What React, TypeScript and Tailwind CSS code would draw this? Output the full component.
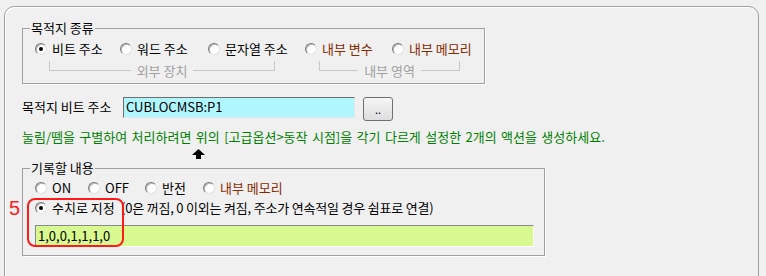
import React from 'react'

const font = { fontFamily: '"Noto Sans CJK KR", "Liberation Sans", sans-serif' }

function Radio({ checked = false }: { checked?: boolean }) {
  return (
    <span className="w-[12px] h-[12px] shrink-0 rounded-full border border-t-[#7a7a7a] border-l-[#7a7a7a] border-b-[#e2e2e2] border-r-[#e2e2e2] bg-white flex items-center justify-center shadow-[inset_1px_1px_0_#b8b8b8]">
      {checked && <span className="w-[4px] h-[4px] rounded-full bg-black" />}
    </span>
  )
}

function Option({ label, checked, width, brown }: { label: string; checked?: boolean; width?: string; brown?: boolean }) {
  return (
    <div className={`flex items-center gap-[5px] h-[14px] ${width ?? ''}`}>
      <Radio checked={checked} />
      <span className={`leading-[14px] whitespace-nowrap ${brown ? 'text-[#862a00]' : 'text-black'}`}>{label}</span>
    </div>
  )
}

function Bracket({ label, width }: { label: string; width: string }) {
  return (
    <div className={`flex ${width}`}>
      <div className="flex-1 h-[10px] border-l border-b border-[#c8c8c8]" />
      <span className="px-[6px] mt-[3px] leading-[14px] text-[#a0a0a0] whitespace-nowrap">{label}</span>
      <div className="flex-1 h-[10px] border-r border-b border-[#c8c8c8]" />
    </div>
  )
}

export default function App() {
  return (
    <div className="relative w-[766px] h-[276px] overflow-hidden bg-[#f0f0f0] text-[13px]" style={font}>
      <div className="ml-[4px] mt-[6px] w-[755px] h-[300px] border border-[#a0a0a0] rounded-t-[10px] shadow-[inset_1px_1px_0_#ffffff] pl-[17px] pt-[14px]">
        {/* 목적지 종류 */}
        <fieldset className="w-[463px] h-[63px] border border-[#a0a0a0] shadow-[1px_1px_0_#ffffff]">
          <legend className="ml-[7px] px-[1px] leading-[14px]">목적지 종류</legend>
          <div className="pl-[12px]">
            <div className="flex mt-[7px]">
              <Option label="비트 주소" checked width="w-[85px]" />
              <Option label="워드 주소" width="w-[88px]" />
              <Option label="문자열 주소" width="w-[97px]" />
              <Option label="내부 변수" width="w-[87px]" brown />
              <Option label="내부 메모리" brown />
            </div>
            <div className="flex mt-[5px] ml-[14px]">
              <Bracket label="외부 장치" width="w-[226px]" />
              <div className="w-[44px]" />
              <Bracket label="내부 영역" width="w-[141px]" />
            </div>
          </div>
        </fieldset>

        <div className="flex items-start mt-[13px]">
          <span className="w-[101px] mt-[3px] leading-[14px] whitespace-nowrap">목적지 비트 주소</span>
          <div className="w-[232px] h-[21px] bg-[#b0f6ff] border border-t-[#6e6e6e] border-l-[#6e6e6e] border-b-[#e6e6e6] border-r-[#e6e6e6] pl-[2px] leading-[18px]">
            CUBLOCMSB:P1
          </div>
          <button className="ml-[8px] w-[30px] h-[24px] rounded-[3px] border border-[#707070] bg-gradient-to-b from-[#f6f6f6] to-[#dedede] leading-[20px] text-[11px]">
            ..
          </button>
        </div>

        <p className="mt-[9px] leading-[14px] text-[#008000] whitespace-nowrap [word-spacing:1.5px]">
          눌림/뗌을 구별하여 처리하려면 위의 [고급옵션&gt;동작 시점]을 각기 다르게 설정한 2개의 액션을 생성하세요.
        </p>

        {/* 기록할 내용 */}
        <fieldset className="mt-[17px] w-[523px] h-[95px] border border-[#a0a0a0] shadow-[1px_1px_0_#ffffff]">
          <legend className="ml-[7px] px-[1px] leading-[14px]">기록할 내용</legend>
          <div className="pl-[12px]">
            <div className="flex mt-[6px]">
              <Option label="ON" width="w-[53px]" />
              <Option label="OFF" width="w-[57px]" />
              <Option label="반전" width="w-[58px]" />
              <Option label="내부 메모리" brown />
            </div>
            <div className="flex mt-[6px]">
              <Option label="수치로 지정" checked width="w-[86px]" />
              <span className="leading-[14px] whitespace-nowrap tracking-[-0.2px]">(0은 꺼짐, 0 이외는 켜짐, 주소가 연속적일 경우 쉼표로 연결)</span>
            </div>
            <div className="mt-[10px] w-[499px] h-[22px] bg-[#d8f890] border border-t-[#8a8a8a] border-l-[#8a8a8a] border-b-[#ffffff] border-r-[#ffffff] pl-[2px] leading-[19px]">
              1,0,0,1,1,1,0
            </div>
          </div>
        </fieldset>
      </div>

      {/* annotations */}
      <svg className="absolute left-[192px] top-[149px]" width="13" height="10" viewBox="0 0 13 10">
        <path d="M6.5 0 L13 6 L9 6 L9 10 L4 10 L4 6 L0 6 Z" fill="#000" />
      </svg>
      <div className="absolute left-[27px] top-[198px] w-[97px] h-[49px] border-2 border-[#ff1a1a] rounded-[8px]" />
      <span className="absolute left-[9px] top-[197px] text-[20px] leading-[22px] text-[#ff2020]" style={{ fontFamily: '"Liberation Sans", sans-serif' }}>
        5
      </span>
    </div>
  )
}
